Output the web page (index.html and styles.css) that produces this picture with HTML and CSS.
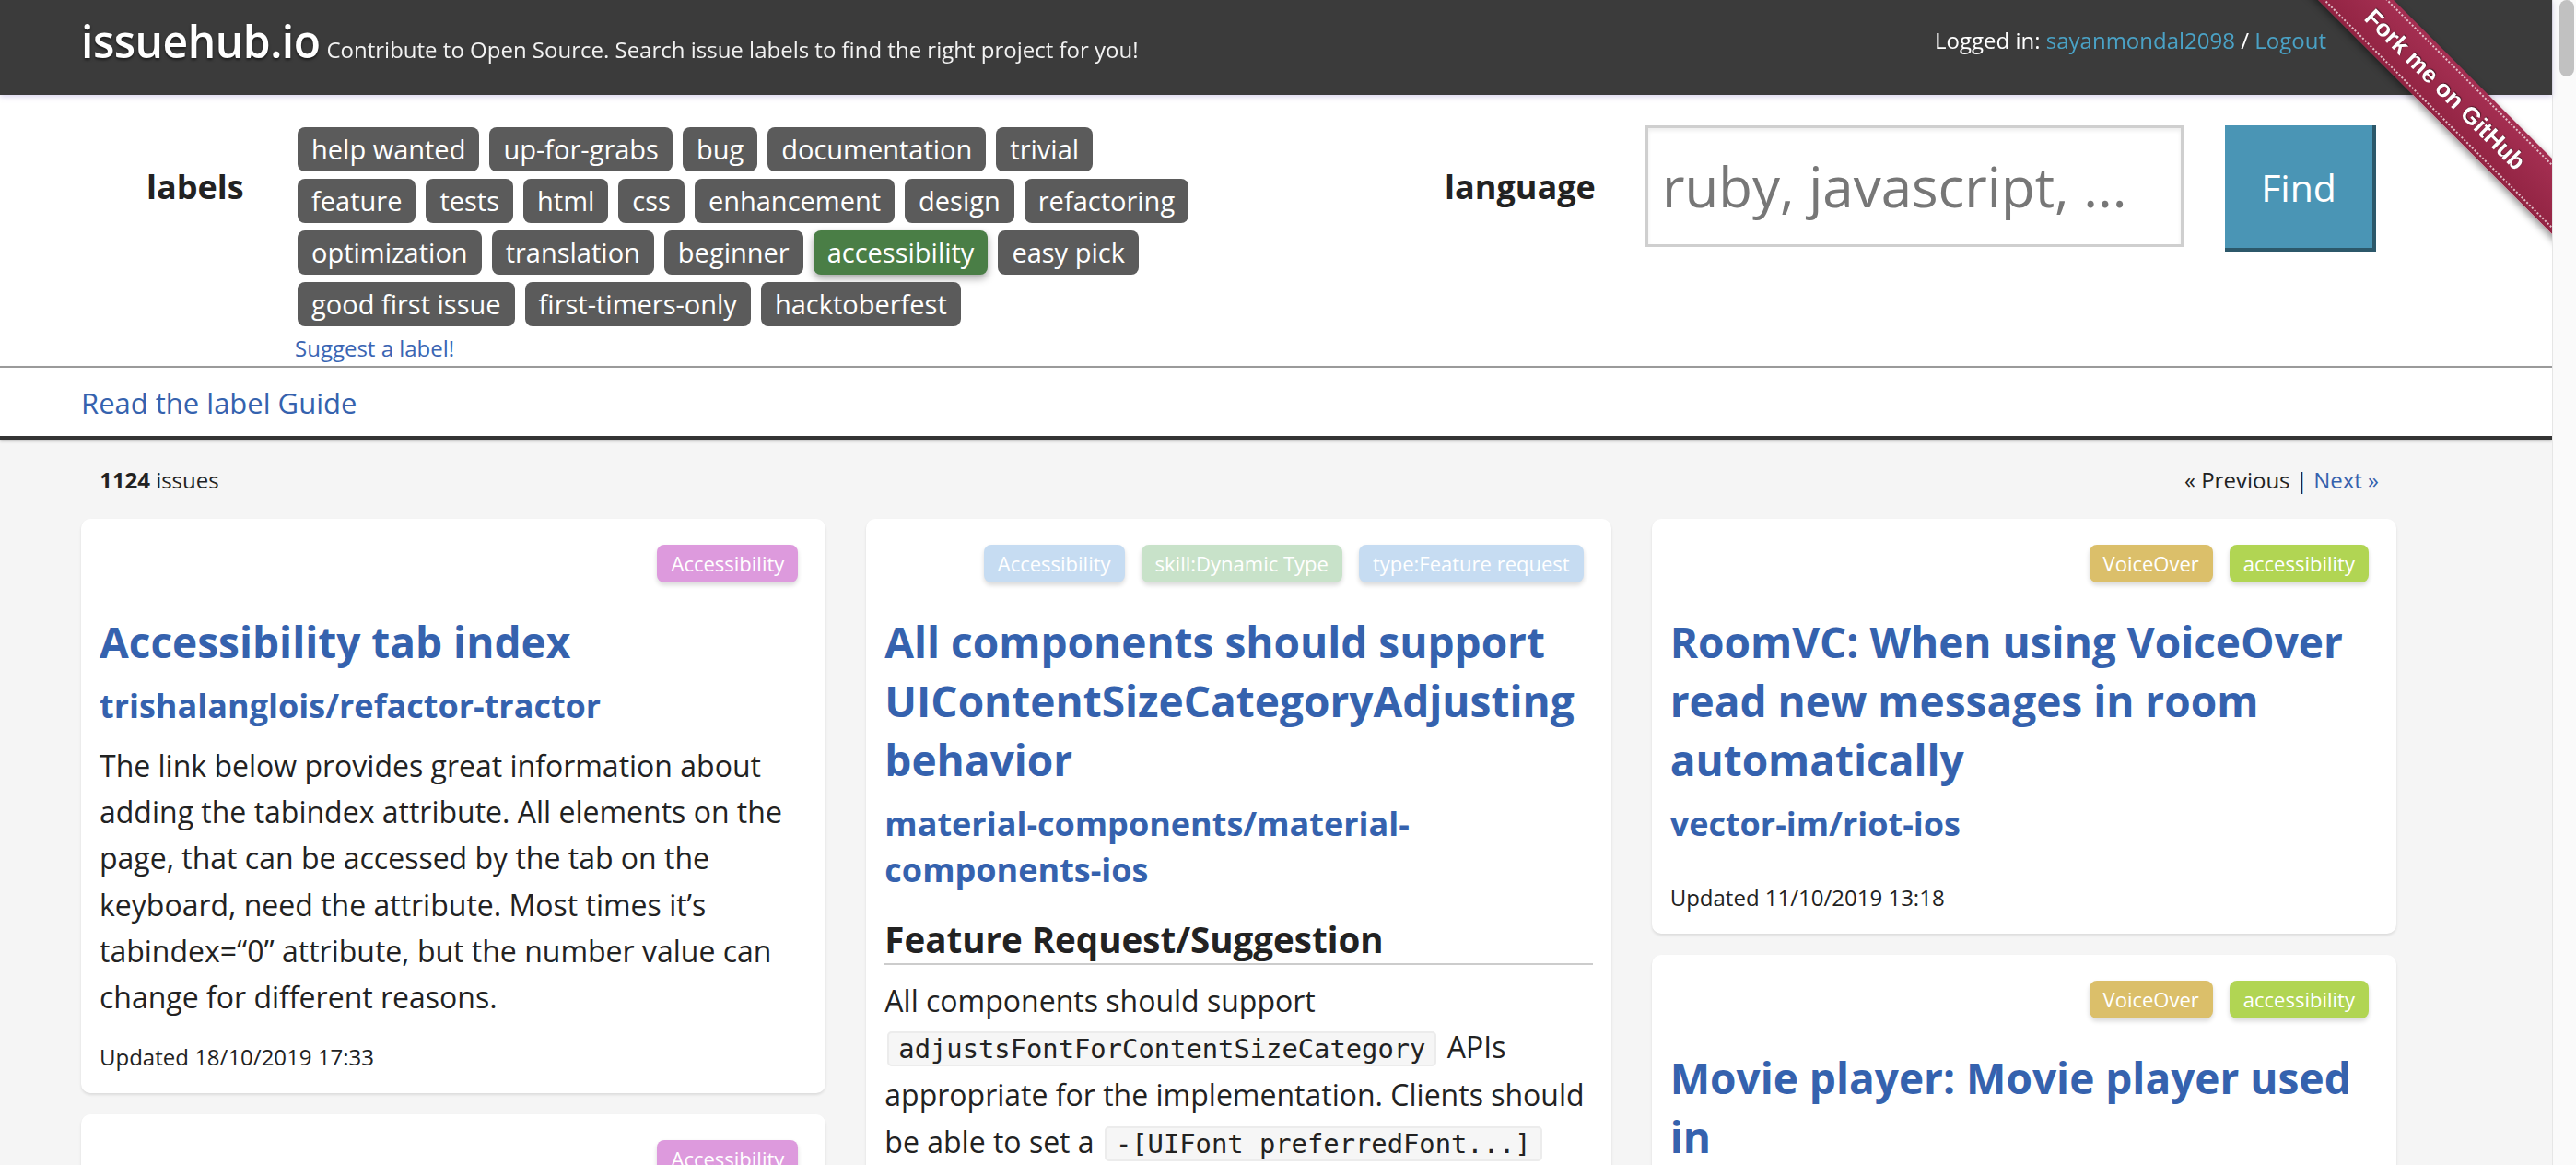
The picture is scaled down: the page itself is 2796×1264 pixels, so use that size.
FILE: index.html
```html
<!DOCTYPE html>
<html lang="en">
<head>
<meta charset="utf-8">
<title>issuehub.io</title>
<link rel="stylesheet" href="styles.css">
</head>
<body>
<div class="page">
  <header class="topbar">
    <div class="brand">
      <a class="logo" href="#">issuehub.io</a>
      <span class="tagline">Contribute to Open Source. Search issue labels to find the right project for you!</span>
    </div>
    <div class="session">Logged in: <a href="#">sayanmondal2098</a> / <a href="#">Logout</a></div>
  </header>

  <div class="ribbon-wrap">
    <div class="ribbon"><a href="#">Fork me on GitHub</a></div>
  </div>

  <section class="search">
    <h2 class="filter-title">labels</h2>
    <div class="labels-box">
      <div class="labels-list">
        <span class="chip">help wanted</span>
        <span class="chip">up-for-grabs</span>
        <span class="chip">bug</span>
        <span class="chip">documentation</span>
        <span class="chip">trivial</span>
        <span class="chip">feature</span>
        <span class="chip">tests</span>
        <span class="chip">html</span>
        <span class="chip">css</span>
        <span class="chip">enhancement</span>
        <span class="chip">design</span>
        <span class="chip">refactoring</span>
        <span class="chip">optimization</span>
        <span class="chip">translation</span>
        <span class="chip">beginner</span>
        <span class="chip chip-active">accessibility</span>
        <span class="chip">easy pick</span>
        <span class="chip">good first issue</span>
        <span class="chip">first-timers-only</span>
        <span class="chip">hacktoberfest</span>
      </div>
      <a class="suggest" href="#">Suggest a label!</a>
    </div>
    <div class="lang-group">
      <h2 class="filter-title lang-title">language</h2>
      <input class="lang-input" type="text" placeholder="ruby, javascript, ...">
      <button class="find-btn" type="button">Find</button>
    </div>
  </section>

  <nav class="guide"><a href="#">Read the label Guide</a></nav>

  <main class="content">
    <div class="content-inner">
      <div class="results-bar">
        <span><b>1124</b> issues</span>
        <span>« Previous | <a href="#">Next »</a></span>
      </div>

      <div class="columns">
        <div class="column">
          <article class="card">
            <div class="card-tags"><span class="tag tag-pink">Accessibility</span></div>
            <h2 class="card-title"><a href="#">Accessibility tab index</a></h2>
            <h3 class="card-repo"><a href="#">trishalanglois/refactor-tractor</a></h3>
            <div class="card-body">
              <p>The link below provides great information about adding the tabindex attribute. All elements on the page, that can be accessed by the tab on the keyboard, need the attribute. Most times it’s tabindex=“0” attribute, but the number value can change for different reasons.</p>
            </div>
            <p class="card-updated">Updated 18/10/2019 17:33</p>
          </article>
          <article class="card">
            <div class="card-tags"><span class="tag tag-pink">Accessibility</span></div>
            <h2 class="card-title"><a href="#">Images need alternative text</a></h2>
            <h3 class="card-repo"><a href="#">trishalanglois/refactor-tractor</a></h3>
            <div class="card-body">
              <p>Every image on the page should have an alt attribute describing it.</p>
            </div>
            <p class="card-updated">Updated 18/10/2019 17:30</p>
          </article>
        </div>

        <div class="column">
          <article class="card">
            <div class="card-tags">
              <span class="tag tag-blue">Accessibility</span>
              <span class="tag tag-green">skill:Dynamic Type</span>
              <span class="tag tag-blue">type:Feature request</span>
            </div>
            <h2 class="card-title"><a href="#">All components should support UIContentSizeCategoryAdjusting behavior</a></h2>
            <h3 class="card-repo"><a href="#">material-components/material-components-ios</a></h3>
            <div class="card-body">
              <h4 class="md-heading">Feature Request/Suggestion</h4>
              <p>All components should support <code>adjustsFontForContentSizeCategory</code> APIs appropriate for the implementation. Clients should be able to set a <code>-[UIFont preferredFont...]</code> font and have the component update automatically when the content size category changes.</p>
            </div>
            <p class="card-updated">Updated 15/10/2019 20:41</p>
          </article>
        </div>

        <div class="column">
          <article class="card">
            <div class="card-tags">
              <span class="tag tag-gold">VoiceOver</span>
              <span class="tag tag-lime">accessibility</span>
            </div>
            <h2 class="card-title"><a href="#">RoomVC: When using VoiceOver read new messages in room automatically</a></h2>
            <h3 class="card-repo"><a href="#">vector-im/riot-ios</a></h3>
            <div class="card-body card-body-empty"></div>
            <p class="card-updated">Updated 11/10/2019 13:18</p>
          </article>
          <article class="card">
            <div class="card-tags">
              <span class="tag tag-gold">VoiceOver</span>
              <span class="tag tag-lime">accessibility</span>
            </div>
            <h2 class="card-title"><a href="#">Movie player: Movie player used in</a></h2>
            <h3 class="card-repo"><a href="#">vector-im/riot-ios</a></h3>
            <div class="card-body card-body-empty"></div>
            <p class="card-updated">Updated 11/10/2019 13:18</p>
          </article>
        </div>
      </div>
    </div>
  </main>
</div>
<div class="scrollbar"><div class="scrollbar-thumb"></div></div>
</body>
</html>
```

FILE: styles.css
```css
* { box-sizing: border-box; }

html { overflow: hidden; }

body {
  margin: 0;
  font-family: "Open Sans", "Noto Sans", sans-serif;
  color: #222;
  background: #f5f5f5;
}

a { text-decoration: none; }

.page {
  position: relative;
  margin-right: 26px;
  min-height: 1264px;
  background: #f5f5f5;
}

/* ---------- top bar ---------- */
.topbar {
  position: relative;
  z-index: 2;
  display: flex;
  align-items: flex-start;
  height: 103px;
  padding: 0 245px 0 88px;
  background: #3b3b3b;
  box-shadow: 0 2px 6px rgba(110, 90, 190, 0.28);
}

.brand {
  display: flex;
  align-items: baseline;
  gap: 7px;
  margin-top: 13px;
}

.logo {
  font-size: 48px;
  font-weight: 600;
  line-height: 64px;
  color: #fff;
  letter-spacing: -0.5px;
  text-shadow: 0 2px 3px rgba(0, 0, 0, 0.55);
}

.tagline {
  font-size: 24px;
  color: #f2f2f2;
}

.session {
  margin-left: auto;
  margin-top: 28px;
  font-size: 24px;
  line-height: 32px;
  color: #fff;
}

.session a { color: #4aa2c6; }

/* ---------- ribbon ---------- */
.ribbon-wrap {
  position: absolute;
  top: 0;
  right: 0;
  width: 300px;
  height: 300px;
  overflow: hidden;
  z-index: 3;
  pointer-events: none;
}

.ribbon {
  position: absolute;
  left: -26px;
  top: 68px;
  width: 420px;
  height: 58px;
  padding: 4px 0;
  transform: rotate(45deg);
  background: linear-gradient(#a52f52, #922443);
  box-shadow: 0 3px 8px rgba(0, 0, 0, 0.45);
}

.ribbon a {
  display: block;
  height: 50px;
  border-top: 2px dotted rgba(255, 255, 255, 0.7);
  border-bottom: 2px dotted rgba(255, 255, 255, 0.7);
  color: #fff;
  font-family: "Liberation Sans", Arial, sans-serif;
  font-weight: 700;
  font-size: 26px;
  line-height: 46px;
  text-align: center;
  text-shadow: 0 -1px 1px rgba(0, 0, 0, 0.6);
}

/* ---------- search ---------- */
.search {
  display: flex;
  align-items: flex-start;
  height: 294px;
  padding: 33px 0 0 159px;
  background: #fff;
}

.filter-title {
  width: 164px;
  margin: 42px 0 0;
  font-size: 36px;
  font-weight: 700;
  line-height: 50px;
  color: #222;
}

.labels-box {
  width: 975px;
  margin-top: 2px;
}

.labels-list {
  display: flex;
  flex-wrap: wrap;
  gap: 8px 11px;
}

.chip {
  height: 48px;
  padding: 0 15px;
  border-radius: 8px;
  background: #5b5b5b;
  color: #fff;
  font-size: 29px;
  line-height: 48px;
  white-space: nowrap;
}

.chip-active {
  background: #4a7e46;
  box-shadow: 0 4px 8px rgba(0, 0, 0, 0.35);
}

.suggest {
  display: block;
  margin: 6px 0 0 -3px;
  font-size: 24px;
  line-height: 36px;
  color: #3a65b3;
}

.lang-group {
  display: flex;
  align-items: flex-start;
  margin-left: 270px;
}

.lang-title { width: 218px; }

.lang-input {
  width: 584px;
  height: 132px;
  padding: 0 15px;
  border: 3px solid #cfcfcf;
  background: #fff;
  box-shadow: inset 0 3px 4px rgba(0, 0, 0, 0.07);
  font-family: "Open Sans", sans-serif;
  font-size: 60px;
  color: #555;
  outline: none;
}

.lang-input::placeholder { color: #777; }

.find-btn {
  width: 164px;
  height: 137px;
  margin-left: 45px;
  border: 0;
  border-right: 4px solid #2c586a;
  border-bottom: 4px solid #2c586a;
  background: #4a95b5;
  color: #fff;
  font-family: "Open Sans", sans-serif;
  font-size: 41px;
  padding: 0;
}

/* ---------- guide ---------- */
.guide {
  position: relative;
  padding: 16px 0 14px 88px;
  border-top: 2px solid #9a9a9a;
  border-bottom: 4px solid #343434;
  background: #fff;
  box-shadow: 0 2px 3px rgba(0, 0, 0, 0.18);
}

.guide a {
  font-size: 31px;
  line-height: 44px;
  color: #3562ae;
}

/* ---------- results ---------- */
.content {
  padding: 26px 0 40px 88px;
}

.content-inner { width: 2513px; }

.results-bar {
  display: flex;
  justify-content: space-between;
  padding: 0 19px 0 20px;
  font-size: 24px;
  line-height: 36px;
  color: #222;
}

.results-bar a { color: #3562ae; }

.columns {
  display: grid;
  grid-template-columns: repeat(3, 1fr);
  column-gap: 44px;
  align-items: start;
  margin-top: 24px;
}

.column {
  display: flex;
  flex-direction: column;
  gap: 23px;
}

.card {
  padding: 28px 20px 21px;
  border-radius: 10px;
  background: #fff;
  box-shadow: 0 2px 3px rgba(0, 0, 0, 0.1);
}

.card-tags {
  display: flex;
  justify-content: flex-end;
  margin-right: 1px;
}

.tag {
  height: 41px;
  margin: 0 9px;
  padding: 0 15px;
  border-radius: 8px;
  color: #fff;
  font-size: 22px;
  line-height: 41px;
  white-space: nowrap;
  box-shadow: 0 3px 5px rgba(0, 0, 0, 0.15);
}

.tag-pink { background: #dd9add; }
.tag-blue { background: #c6dcf2; }
.tag-green { background: #c8e2c9; }
.tag-gold { background: #dbbf6a; }
.tag-lime { background: #b1d553; }

.card-title {
  margin: 32px 0 0;
  font-size: 46px;
  font-weight: 700;
  line-height: 64px;
}

.card-title a,
.card-repo a { color: #3562ae; }

.card-repo {
  margin: 13px 0 0;
  font-size: 36px;
  font-weight: 700;
  line-height: 50px;
}

.card-body {
  margin-top: 15px;
  font-size: 32px;
  line-height: 50.2px;
  color: #222;
}

.card-body-empty {
  height: 1px;
  margin-top: 14px;
}

.card-body p { margin: 0; }

.md-heading {
  margin: 25px 0 0;
  padding-bottom: 1px;
  border-bottom: 2px solid #cccccc;
  font-size: 38.5px;
  font-weight: 700;
  line-height: 50px;
}

.md-heading + p { margin-top: 14px; }

code {
  margin: 0 3px;
  padding: 0 10px;
  border: 2px solid #ececec;
  border-radius: 5px;
  background: #f6f6f6;
  font-family: "DejaVu Sans Mono", "Liberation Mono", monospace;
  font-size: 28.8px;
}

.card-updated {
  margin: 22px 0 0;
  font-size: 24px;
  line-height: 36px;
  color: #222;
}

/* ---------- fake browser scrollbar ---------- */
.scrollbar {
  position: fixed;
  top: 0;
  right: 0;
  width: 26px;
  height: 100%;
  background: #fafafa;
  border-left: 1px solid #e6e6e6;
}

.scrollbar-thumb {
  position: absolute;
  top: 0;
  left: 7px;
  width: 16px;
  height: 83px;
  border-radius: 8px;
  background: #c1c1c1;
}
```
